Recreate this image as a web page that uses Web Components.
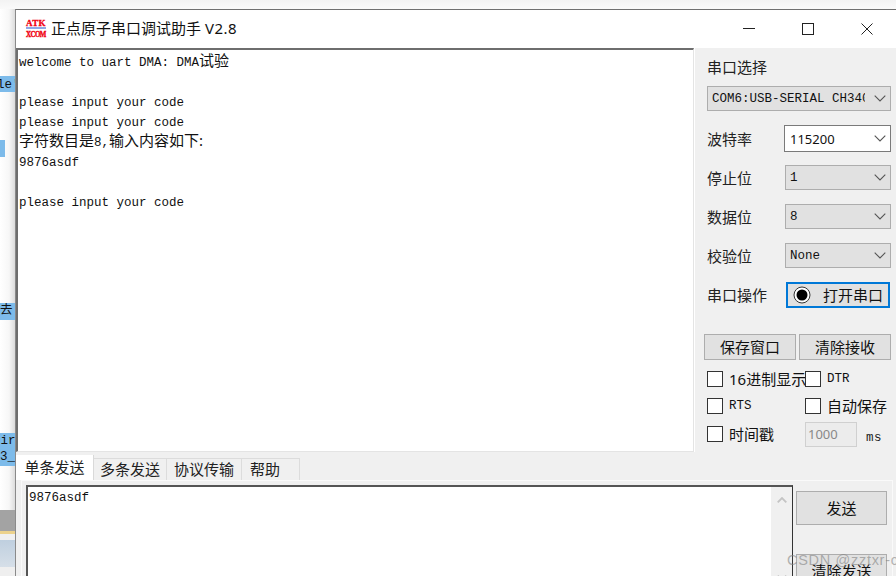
<!DOCTYPE html>
<html>
<head>
<meta charset="utf-8">
<title>XCOM</title>
<style>
    html, body { margin: 0; height: 576px; overflow: hidden; background: #fff; }
</style>
</head>
<body>
<desk-top>
    <app-window>
        <title-bar slot="title">正点原子串口调试助手 <span style="letter-spacing:.5px">V2.8</span></title-bar>
        <recv-pane slot="recv">
            <div>welcome to uart DMA: DMA<span>试验</span></div>
            <div>&nbsp;</div>
            <div>please input your code</div>
            <div>please input your code</div>
            <div><span>字符数目是</span>8,<span>输入内容如下:</span></div>
            <div>9876asdf</div>
            <div>&nbsp;</div>
            <div>please input your code</div>
        </recv-pane>
        <side-panel slot="side"></side-panel>
        <send-pane slot="send"></send-pane>
    </app-window>
</desk-top>

<script>
const CJK = `"Noto Sans", "Noto Sans CJK SC", sans-serif`;
const MONO = `"Liberation Mono", "Noto Sans CJK SC", monospace`;

class DeskTop extends HTMLElement {
    constructor() {
        super();
        this.attachShadow({ mode: "open" }).innerHTML = `
            <style>
                :host { display: block; position: relative; width: 896px; height: 576px; overflow: hidden;
                    background: linear-gradient(#f3f3f3, #fafafa 9px); }
                .shade { position: absolute; left: 0; top: 9px; width: 15px; height: 501px;
                    background: linear-gradient(90deg, #ffffff, #f7f7f7 60%, #dcdcdc); }
                .hl { position: absolute; left: 0; width: 15px; background: #7dbbea; color: #111;
                    font: 12.5px/16px ${MONO}; overflow: hidden; white-space: nowrap; }
                .gray { position: absolute; left: 0; top: 510px; width: 15px; height: 21px; background: #a3a3a3; }
                .line { position: absolute; left: 0; top: 531px; width: 15px; height: 3px; background: #ecd28c; }
                .light { position: absolute; left: 0; top: 534px; width: 15px; height: 6px; background: #f0f0f0; }
                .blue { position: absolute; left: 0; top: 540px; width: 15px; height: 27px;
                    background: linear-gradient(#bfcfdf, #d6dfe8); }
                .foot { position: absolute; left: 0; top: 567px; width: 15px; height: 9px; background: #efefef; }
            </style>
            <div class="shade"></div>
            <div class="hl" style="top:76px;height:16px;padding-top:1px;box-sizing:border-box"><span style="margin-left:-3px">le'</span></div>
            <div class="hl" style="top:140px;height:17px;width:5px;"></div>
            <div class="hl" style="top:303px;height:17px;font-family:${CJK};font-size:14px;">去</div>
            <div class="hl" style="top:433px;height:33px;"><div style="margin-left:-7px">uir</div><div>3_</div></div>
            <div class="gray"></div><div class="line"></div><div class="light"></div>
            <div class="blue"></div><div class="foot"></div>
            <slot></slot>
        `;
    }
}

// window itself sits on the desktop, inside is flow only
class AppWindow extends HTMLElement {
    constructor() {
        super();
        this.attachShadow({ mode: "open" }).innerHTML = `
            <style>
                :host { display: grid; position: absolute; left: 15px; top: 9px; width: 881px; height: 567px;
                    box-sizing: border-box; background: #f0f0f0; border-top: 1px solid #707070; border-left: 1px solid #8a8a8a;
                    grid-template-columns: 678px 1fr; grid-template-rows: 38px 404px 1fr; }
                ::slotted([slot=title]) { grid-column: 1 / 3; }
                ::slotted([slot=send]) { grid-column: 1 / 3; }
            </style>
            <slot name="title"></slot>
            <slot name="recv"></slot>
            <slot name="side"></slot>
            <slot name="send"></slot>
        `;
    }
}

class TitleBar extends HTMLElement {
    constructor() {
        super();
        this.attachShadow({ mode: "open" }).innerHTML = `
            <style>
                :host { display: flex; align-items: center; background: #fff; color: #111; height: 38px;
                    font: 15px/20px ${CJK}; padding-left: 10px; }
                .logo { width: 20px; height: 18px; margin-right: 5px; margin-top: -1px; color: #f00010; text-align: center;
                    display: flex; flex-direction: column; align-items: center; }
                .logo i { font-style: normal; display: block; white-space: nowrap; }
                .logo .a { font: 900 9px/7px "Liberation Serif", serif; letter-spacing: .4px; -webkit-text-stroke: .3px #f00010; }
                .logo u { display: block; width: 20px; height: 2px; background: #8fa8e8; margin: 0 0 1px; flex: none; }
                .logo .b { font: 900 7px/8px "Liberation Serif", serif; letter-spacing: -.6px; -webkit-text-stroke: .3px #f00010;
                    transform: scaleY(1.25); }
                .text { flex: 1; white-space: nowrap; margin-top: -2px; }
                .ctl { display: flex; margin-right: 23px; }
                .ctl svg { display: block; width: 12px; height: 12px; }
                .ctl svg + svg { margin-left: 47px; }
            </style>
            <div class="logo"><i class="a">ATK</i><u></u><i class="b">XCOM</i></div>
            <div class="text"><slot></slot></div>
            <div class="ctl">
                <svg viewBox="0 0 12 12"><path d="M0 5.5H12" stroke="#222" fill="none"/></svg>
                <svg viewBox="0 0 12 12"><rect x=".5" y=".5" width="11" height="11" stroke="#222" fill="none"/></svg>
                <svg viewBox="0 0 12 12"><path d="M.5 .5L11.5 11.5M11.5 .5L.5 11.5" stroke="#222" fill="none"/></svg>
            </div>
        `;
    }
}

class RecvPane extends HTMLElement {
    constructor() {
        super();
        this.attachShadow({ mode: "open" }).innerHTML = `
            <style>
                :host { display: block; box-sizing: border-box; background: #fff; color: #111; overflow: hidden;
                    border: 1px solid #e4e4e4; border-top: 2px solid #6e6e6e; border-left: 2px solid #6e6e6e;
                    padding: 3px 0 0 1px; font: 12.5px/20px ${MONO}; white-space: nowrap; }
                ::slotted(div) { height: 20px; }
            </style>
            <slot></slot>
        `;
        // cjk runs are bigger than the latin ones
        this.querySelectorAll("span").forEach((s) => {
            s.style.cssText = `font: 15px/15px ${CJK}; vertical-align: baseline;`;
        });
    }
}

class ComboBox extends HTMLElement {
    constructor() {
        super();
        this.attachShadow({ mode: "open" }).innerHTML = `
            <style>
                :host { display: flex; box-sizing: border-box; align-items: center; height: 25px; width: 106px;
                    background: #e1e1e1; border: 1px solid #adadad; color: #111;
                    font: 12.5px/20px ${MONO}; padding-left: 4px; }
                :host([white]) { background: #fff; border-color: #7a7a7a; font-family: ${CJK}; font-size: 13px; padding-left: 5px;
                    height: 27px; width: 107px; }
                .t { flex: 1; overflow: hidden; white-space: nowrap; }
                svg { width: 12px; height: 7px; margin: 0 4px 0 9px; flex: none; }
            </style>
            <div class="t"><slot></slot></div>
            <svg viewBox="0 0 12 7"><path d="M.7 .7L6 6L11.3 .7" stroke="#555" fill="none" stroke-width="1.1"/></svg>
        `;
    }
}

class PushButton extends HTMLElement {
    constructor() {
        super();
        this.attachShadow({ mode: "open" }).innerHTML = `
            <style>
                :host { display: flex; box-sizing: border-box; align-items: center; justify-content: center;
                    background: #e1e1e1; border: 1px solid #adadad; color: #111; height: 26px; width: 92px;
                    font: 15px/20px ${CJK}; }
                :host([primary]) { border: 2px solid #0078d7; justify-content: flex-start; width: 104px; padding-left: 5px; gap: 12px; margin-right: 1px; }
                svg { width: 18px; height: 18px; display: none; }
                :host([primary]) svg { display: block; }
            </style>
            <svg viewBox="0 0 18 18"><circle cx="9" cy="9" r="8" fill="#fff" stroke="#333"/><circle cx="9" cy="9" r="5.5" fill="#000"/></svg>
            <slot></slot>
        `;
    }
}

class CheckBox extends HTMLElement {
    constructor() {
        super();
        this.attachShadow({ mode: "open" }).innerHTML = `
            <style>
                :host { display: flex; align-items: center; height: 20px; white-space: nowrap; color: #111;
                    font: 15px/20px ${CJK}; }
                :host([mono]) { font: 12.5px/20px ${MONO}; }
                i { display: block; box-sizing: border-box; width: 16px; height: 16px; background: #fff;
                    border: 1px solid #333; margin-right: 6px; flex: none; }
            </style>
            <i></i><slot></slot>
        `;
    }
}

class FieldRow extends HTMLElement {
    constructor() {
        super();
        this.attachShadow({ mode: "open" }).innerHTML = `
            <style>
                :host { display: flex; align-items: center; justify-content: space-between; color: #222;
                    font: 15px/20px ${CJK}; }
            </style>
            <slot></slot>
        `;
    }
}

class SidePanel extends HTMLElement {
    constructor() {
        super();
        this.attachShadow({ mode: "open" }).innerHTML = `
            <style>
                :host { display: block; box-sizing: border-box; background: #f0f0f0; border-left: 1px solid #fff; color: #222;
                    padding: 9px 5px 0 12px; font: 15px/20px ${CJK}; }
                .head { height: 20px; margin: 0 0 9px 0; }
                combo-box.wide { width: 184px; margin-bottom: 15px; }
                field-row { height: 25px; margin-bottom: 14px; width: 184px; }
                .btns { display: flex; gap: 3px; margin: 27px 0 0 -3px; }
                .checks { display: grid; grid-template-columns: 98px 1fr; margin-top: 9px; row-gap: 7px; }
                .stamp { display: flex; align-items: center; height: 25px; font-size: 12.5px; font-family: ${MONO}; color: #222; margin-top: -1px; }
                .num { box-sizing: border-box; width: 52px; height: 25px; border: 1px solid #d0d0d0; background: #ececec; color: #888;
                    font: 13px/23px ${CJK}; padding-left: 2px; }
                .ms { margin: 7px 0 0 9px; letter-spacing: .5px; }
            </style>
            <div class="head">串口选择</div>
            <combo-box class="wide">COM6:USB-SERIAL CH340</combo-box>
            <field-row><span>波特率</span><combo-box white>115200</combo-box></field-row>
            <field-row><span>停止位</span><combo-box>1</combo-box></field-row>
            <field-row><span>数据位</span><combo-box>8</combo-box></field-row>
            <field-row><span>校验位</span><combo-box>None</combo-box></field-row>
            <field-row style="margin-bottom:0"><span>串口操作</span><push-button primary>打开串口</push-button></field-row>
            <div class="btns"><push-button>保存窗口</push-button><push-button>清除接收</push-button></div>
            <div class="checks">
                <check-box>16进制显示</check-box><check-box mono>DTR</check-box>
                <check-box mono>RTS</check-box><check-box>自动保存</check-box>
                <check-box style="align-self:center;margin-top:-3px">时间戳</check-box>
                <div class="stamp"><div class="num">1000</div><div class="ms">ms</div></div>
            </div>
        `;
    }
}

class SendPane extends HTMLElement {
    constructor() {
        super();
        this.attachShadow({ mode: "open" }).innerHTML = `
            <style>
                :host { display: block; padding-top: 3px; font: 15px/20px ${CJK}; color: #222; }
                .tabs { display: flex; height: 25px; align-items: flex-end; }
                .tab { box-sizing: border-box; height: 22px; background: #f0f0f0; border: 1px solid #dcdcdc; border-bottom: 0; border-left: 0;
                    text-align: center; line-height: 20px; white-space: nowrap; }
                .tab.on { height: 25px; background: #fff; border: 0; border-right: 1px solid #d9d9d9; line-height: 24px; }
                .body { box-sizing: border-box; display: flex; height: 110px; margin: 0 3px 0 5px;
                    border-top: 1px solid #fafafa; border-left: 1px solid #fafafa; border-right: 1px solid #fafafa; padding: 4px 0 0 4px; }
                .edit { box-sizing: border-box; display: flex; flex: none; width: 767px; height: 110px; background: #fff;
                    border: 1px solid #333; border-top: 2px solid #555; border-left: 2px solid #555; }
                .txt { flex: 1; font: 12.5px/20px ${MONO}; color: #111; padding: 1px 0 0 1px; }
                .bar { width: 21px; background: #f0f0f0; display: flex; flex-direction: column; align-items: center; padding-top: 10px; }
                .bar svg { width: 10px; height: 6px; flex: none; }
                .bar svg + svg { margin-top: 72px; }
                .act { display: flex; flex-direction: column; margin: 6px 0 0 3px; gap: 29px; }
                .act push-button { width: 91px; height: 34px; }
            </style>
            <div class="tabs">
                <div class="tab on" style="width:78px">单条发送</div>
                <div class="tab" style="width:73px">多条发送</div>
                <div class="tab" style="width:75px">协议传输</div>
                <div class="tab" style="width:58px;text-align:left;padding-left:8px">帮助</div>
            </div>
            <div class="body">
                <div class="edit">
                    <div class="txt">9876asdf</div>
                    <div class="bar">
                        <svg viewBox="0 0 10 6"><path d="M.7 5.3L5 1L9.3 5.3" stroke="#c4c4c4" stroke-width="1.8" fill="none"/></svg>
                        <svg viewBox="0 0 10 6"><path d="M.7 .7L5 5L9.3 .7" stroke="#c4c4c4" stroke-width="1.8" fill="none"/></svg>
                    </div>
                </div>
                <div class="act"><push-button>发送</push-button><push-button>清除发送</push-button></div>
            </div>
            <water-mark>CSDN @zztxr-c</water-mark>
        `;
    }
}

// watermark lies over the buttons
class WaterMark extends HTMLElement {
    constructor() {
        super();
        this.attachShadow({ mode: "open" }).innerHTML = `
            <style>
                :host { display: block; position: absolute; left: 771px; top: 540px; white-space: nowrap;
                    font: 14.5px/20px "Liberation Sans", sans-serif; color: rgba(130,130,130,.6); letter-spacing: .7px; }
            </style>
            <slot></slot>
        `;
    }
}

customElements.define("desk-top", DeskTop);
customElements.define("app-window", AppWindow);
customElements.define("title-bar", TitleBar);
customElements.define("recv-pane", RecvPane);
customElements.define("combo-box", ComboBox);
customElements.define("push-button", PushButton);
customElements.define("check-box", CheckBox);
customElements.define("field-row", FieldRow);
customElements.define("side-panel", SidePanel);
customElements.define("send-pane", SendPane);
customElements.define("water-mark", WaterMark);
</script>
</body>
</html>
